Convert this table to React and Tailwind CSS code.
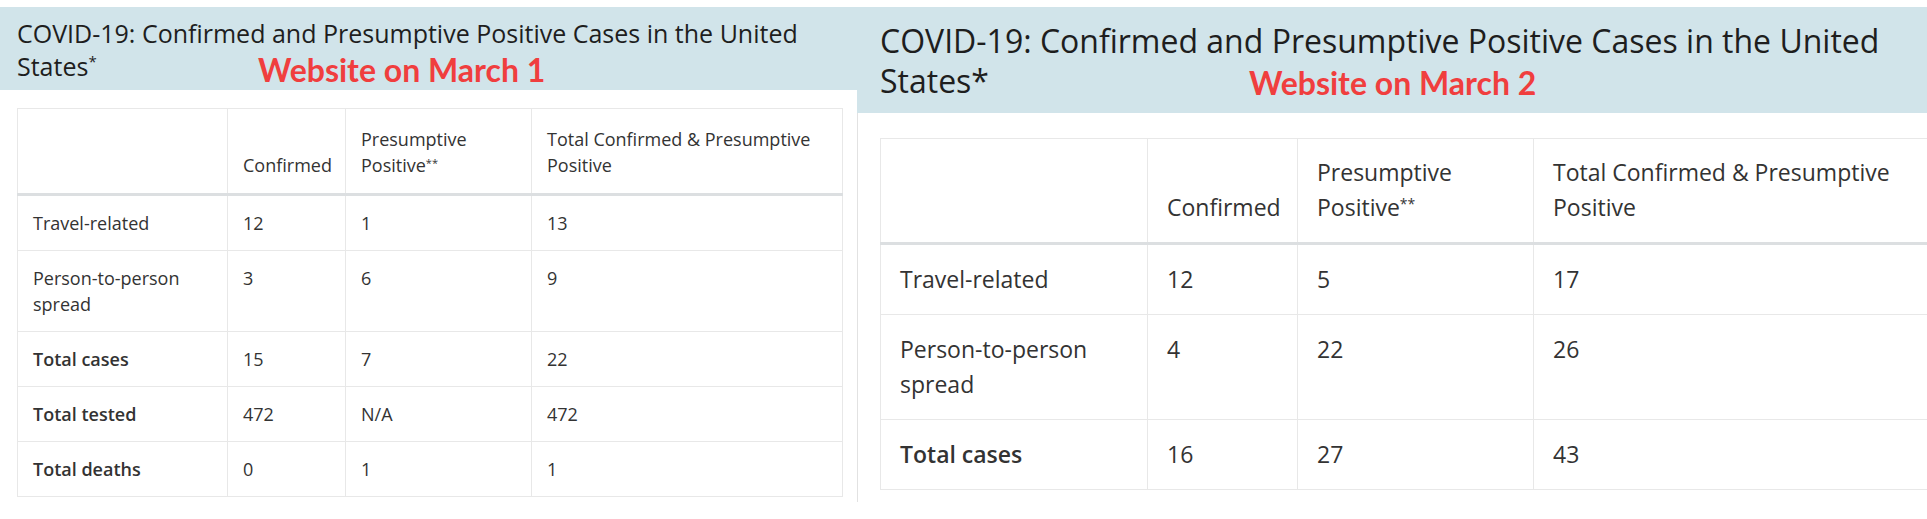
import React from "react";

const FONT = "font-['Open_Sans',_'Liberation_Sans',_sans-serif]";

const march1 = {
    rows: [
        ["Travel-related", "12", "1", "13", false],
        ["Person-to-person spread", "3", "6", "9", false],
        ["Total cases", "15", "7", "22", true],
        ["Total tested", "472", "N/A", "472", true],
        ["Total deaths", "0", "1", "1", true],
    ],
};

const march2 = {
    rows: [
        ["Travel-related", "12", "5", "17", false],
        ["Person-to-person spread", "4", "22", "26", false],
        ["Total cases", "16", "27", "43", true],
    ],
};

function Cell({ cls, bold, children }) {
    return (
        <td className={`${cls} border border-[#e8e8e8] align-top text-[#333] ${bold ? "font-semibold text-[#222]" : "font-normal"}`}>
            {children}
        </td>
    );
}

export default function App() {
    const leftCell = "px-[15px] py-[14px] text-[18px] leading-[26px]";
    const leftHead = "px-[15px] pt-[17px] pb-[15px] text-[18px] leading-[26px]";
    const rightCell = "px-[19px] py-[17px] text-[23px] leading-[35px]";
    const rightHead = "px-[19px] pt-[16px] pb-[17px] text-[23px] leading-[35px]";

    return (
        <div className={`${FONT} w-[1927px] h-[519px] bg-white overflow-hidden flex pt-[7px]`}>
            {/* March 1 */}
            <section className="w-[857px] shrink-0 flex flex-col">
                <div className="relative bg-[#d1e4ea] pt-[10px] pb-[7px] pl-[17px] pr-[10px] text-[25px] leading-[33px] text-[#1e1e1e] whitespace-nowrap">
                    <h2 className="font-normal">
                        COVID-19: Confirmed and Presumptive Positive Cases in the United
                        <br />
                        States<sup className="text-[15px] -top-[9px]">*</sup>
                    </h2>
                    <span className="absolute left-[258px] top-[47px] font-['Lato',_sans-serif] font-bold text-[32px] leading-none text-[#f03e3e]">
                        Website on March 1
                    </span>
                </div>
                <div className="pt-[18px] pl-[17px]">
                    <table className="table-fixed border-collapse w-[825px] border border-[#e8e8e8]">
                        <colgroup>
                            <col className="w-[210px]" />
                            <col className="w-[118px]" />
                            <col className="w-[186px]" />
                            <col className="w-[311px]" />
                        </colgroup>
                        <thead>
                            <tr>
                                <th className={`${leftHead} border border-[#e8e8e8] border-b-[3px] border-b-[#dcdfe1]`}></th>
                                <th className={`${leftHead} border border-[#e8e8e8] border-b-[3px] border-b-[#dcdfe1] align-bottom text-left font-normal text-[#333]`}>Confirmed</th>
                                <th className={`${leftHead} border border-[#e8e8e8] border-b-[3px] border-b-[#dcdfe1] align-bottom text-left font-normal text-[#333]`}>
                                    Presumptive Positive<sup className="text-[11px]">**</sup>
                                </th>
                                <th className={`${leftHead} border border-[#e8e8e8] border-b-[3px] border-b-[#dcdfe1] align-bottom text-left font-normal text-[#333]`}>
                                    Total Confirmed &amp; Presumptive Positive
                                </th>
                            </tr>
                        </thead>
                        <tbody>
                            {march1.rows.map((r) => (
                                <tr key={r[0]}>
                                    <Cell cls={leftCell} bold={r[4]}>{r[0]}</Cell>
                                    <Cell cls={leftCell}>{r[1]}</Cell>
                                    <Cell cls={leftCell}>{r[2]}</Cell>
                                    <Cell cls={leftCell}>{r[3]}</Cell>
                                </tr>
                            ))}
                        </tbody>
                    </table>
                </div>
            </section>

            {/* March 2 */}
            <section className="flex-1 min-w-0 flex flex-col overflow-hidden">
                <div className="relative bg-[#d1e4ea] pt-[14px] pb-[12px] pl-[23px] text-[32px] leading-[40px] text-[#1e1e1e] whitespace-nowrap">
                    <h2 className="font-normal">
                        COVID-19: Confirmed and Presumptive Positive Cases in the United
                        <br />
                        States*
                    </h2>
                    <span className="absolute left-[392px] top-[60px] font-['Lato',_sans-serif] font-bold text-[32px] leading-none text-[#f03e3e]">
                        Website on March 2
                    </span>
                </div>
                <div className="h-[389px] border-l border-[#e2e2e2] pt-[25px] pl-[22px]">
                    <table className="table-fixed border-collapse w-[1048px] border border-[#e8e8e8]">
                        <colgroup>
                            <col className="w-[267px]" />
                            <col className="w-[150px]" />
                            <col className="w-[236px]" />
                            <col className="w-[395px]" />
                        </colgroup>
                        <thead>
                            <tr>
                                <th className={`${rightHead} border border-[#e8e8e8] border-b-[3px] border-b-[#dcdfe1]`}></th>
                                <th className={`${rightHead} border border-[#e8e8e8] border-b-[3px] border-b-[#dcdfe1] align-bottom text-left font-normal text-[#333]`}>Confirmed</th>
                                <th className={`${rightHead} border border-[#e8e8e8] border-b-[3px] border-b-[#dcdfe1] align-bottom text-left font-normal text-[#333]`}>
                                    Presumptive Positive<sup className="text-[14px]">**</sup>
                                </th>
                                <th className={`${rightHead} border border-[#e8e8e8] border-b-[3px] border-b-[#dcdfe1] align-bottom text-left font-normal text-[#333]`}>
                                    Total Confirmed &amp; Presumptive Positive
                                </th>
                            </tr>
                        </thead>
                        <tbody>
                            {march2.rows.map((r) => (
                                <tr key={r[0]}>
                                    <Cell cls={rightCell} bold={r[4]}>{r[0]}</Cell>
                                    <Cell cls={rightCell}>{r[1]}</Cell>
                                    <Cell cls={rightCell}>{r[2]}</Cell>
                                    <Cell cls={rightCell}>{r[3]}</Cell>
                                </tr>
                            ))}
                        </tbody>
                    </table>
                </div>
            </section>
        </div>
    );
}
